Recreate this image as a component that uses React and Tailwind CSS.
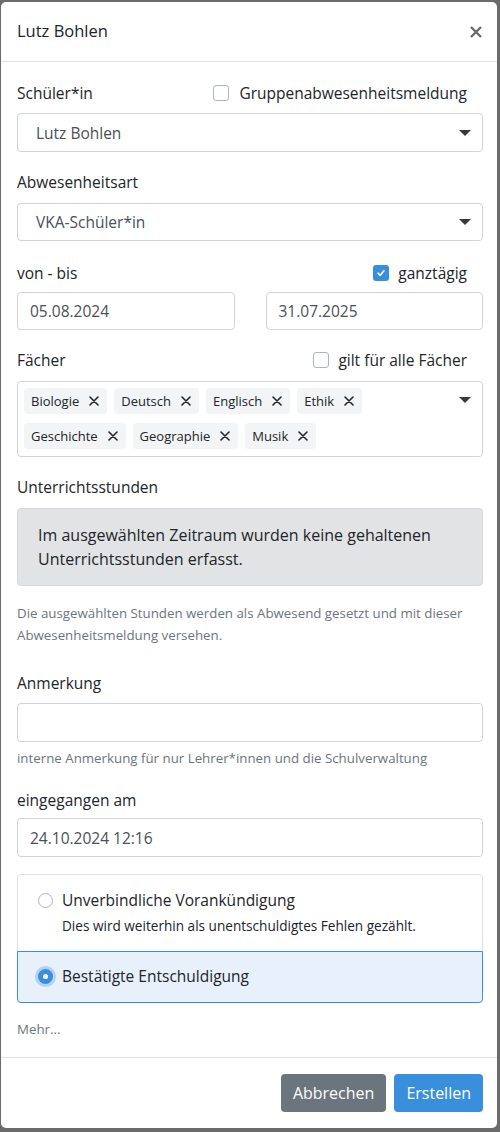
import React from "react";

const Caret = () => (
  <svg width="12" height="6" viewBox="0 0 12 6" className="shrink-0">
    <path d="M0 0 L12 0 L6 6 Z" fill="#343a40" />
  </svg>
);

const TagX = () => (
  <svg width="10" height="10" viewBox="0 0 10 10" className="ml-[10px] shrink-0">
    <path d="M1 1 L9 9 M9 1 L1 9" stroke="#212529" strokeWidth="1.6" strokeLinecap="round" />
  </svg>
);

const Checkbox = ({ checked }) =>
  checked ? (
    <span className="w-4 h-4 rounded-[3px] bg-[#3a8fdd] flex items-center justify-center shrink-0">
      <svg width="10" height="10" viewBox="0 0 10 10">
        <path d="M2 5.2 L4.2 7.3 L8 2.8" stroke="#fff" strokeWidth="1.6" fill="none" strokeLinecap="round" strokeLinejoin="round" />
      </svg>
    </span>
  ) : (
    <span className="w-4 h-4 rounded-[3px] border border-[#adb5bd] bg-white shrink-0" />
  );

const Select = ({ value, className = "" }) => (
  <div className={"border border-[#ced4da] rounded-[4px] flex items-center justify-between pl-[18px] pr-[11px] text-[#495057] " + className}>
    <span>{value}</span>
    <Caret />
  </div>
);

const Input = ({ value, className = "" }) => (
  <div className={"border border-[#ced4da] rounded-[4px] flex items-center px-[12px] text-[#495057] " + className}>
    {value}
  </div>
);

const tags = [
  ["Biologie", "Deutsch", "Englisch", "Ethik"],
  ["Geschichte", "Geographie", "Musik"],
];

const App = () => {
  return (
    <div className="w-[500px] h-[1132px] bg-[#6b6b6b] pl-[1px] pt-[2px] font-['Open_Sans',sans-serif] text-[15.5px] text-[#212529]">
      <div className="w-[496px] h-[1126px] bg-white rounded-[5px] flex flex-col">
        <div className="h-[60px] border-b border-[#dee2e6] flex items-center justify-between pl-4 pr-[15px] shrink-0">
          <span className="text-[16.5px]">Lutz Bohlen</span>
          <svg width="12" height="12" viewBox="0 0 12 12">
            <path d="M1 1 L11 11 M11 1 L1 11" stroke="#6b6b6b" strokeWidth="2.4" />
          </svg>
        </div>

        <div className="pl-4 pr-[14px] pt-[19px] pb-[17px] leading-6">
          <div className="flex justify-between items-center mb-2">
            <span>Schüler*in</span>
            <label className="flex items-center gap-[10px] pr-[16px]">
              <Checkbox />
              <span>Gruppenabwesenheitsmeldung</span>
            </label>
          </div>
          <Select value="Lutz Bohlen" className="h-[39px]" />

          <div className="mt-[18px] mb-[9px]">Abwesenheitsart</div>
          <Select value="VKA-Schüler*in" className="h-[38px]" />

          <div className="flex justify-between items-center mt-[20px] mb-[7px]">
            <span>von - bis</span>
            <label className="flex items-center gap-[9px] pr-[16px]">
              <Checkbox checked />
              <span>ganztägig</span>
            </label>
          </div>
          <div className="flex gap-[31px]">
            <Input value="05.08.2024" className="flex-1 h-[38px]" />
            <Input value="31.07.2025" className="flex-1 h-[38px]" />
          </div>

          <div className="flex justify-between items-center mt-[18px] mb-[9px]">
            <span>Fächer</span>
            <label className="flex items-center gap-[9px] pr-[16px]">
              <Checkbox />
              <span>gilt für alle Fächer</span>
            </label>
          </div>
          <div className="h-[76px] border border-[#ced4da] rounded-[4px] flex justify-between pl-[6px] pr-[11px] pt-[6px]">
            <div className="flex flex-col gap-[9px]">
              {tags.map((row, i) => (
                <div key={i} className="flex gap-[7px]">
                  {row.map((t) => (
                    <span key={t} className="h-[26px] bg-[#f3f4f6] rounded-[4px] flex items-center pl-[7px] pr-[8px] text-[13px] text-[#212529]">
                      {t}
                      <TagX />
                    </span>
                  ))}
                </div>
              ))}
            </div>
            <div className="pt-[9px]">
              <Caret />
            </div>
          </div>

          <div className="mt-[18px] mb-[9px]">Unterrichtsstunden</div>
          <div className="bg-[#e2e3e5] border border-[#d6d8db] rounded-[4px] px-5 py-[14px] text-[16px]">
            Im ausgewählten Zeitraum wurden keine gehaltenen Unterrichtsstunden erfasst.
          </div>
          <p className="mt-[16px] text-[13.3px] leading-[22px] text-[#6c757d]">
            Die ausgewählten Stunden werden als Abwesend gesetzt und mit dieser Abwesenheitsmeldung versehen.
          </p>

          <div className="mt-[25px] mb-2">Anmerkung</div>
          <Input value="" className="h-[39px]" />
          <p className="mt-[5px] text-[13.3px] leading-[22px] text-[#6c757d]">
            interne Anmerkung für nur Lehrer*innen und die Schulverwaltung
          </p>

          <div className="mt-[19px] mb-[6px]">eingegangen am</div>
          <Input value="24.10.2024 12:16" className="h-[39px]" />

          <div className="mt-[17px] border border-[#dee2e6] rounded-[4px]">
            <div className="pl-5 pt-[13px] pb-[16px]">
              <div className="flex items-center gap-[9px]">
                <span className="w-[15px] h-[15px] rounded-full border border-[#adb5bd] bg-white shrink-0" />
                <span>Unverbindliche Vorankündigung</span>
              </div>
              <div className="pl-[24px] mt-[4px] text-[13.6px] leading-5">
                Dies wird weiterhin als unentschuldigtes Fehlen gezählt.
              </div>
            </div>
            <div className="-m-px border border-[#3a8fdd] bg-[#e8f1fb] rounded-b-[4px] pl-5 pt-[12px] pb-[14px]">
              <div className="flex items-center gap-[9px]">
                <span className="w-[15px] h-[15px] rounded-full bg-[#3a8fdd] shadow-[0_0_0_3px_rgba(58,143,221,0.3)] flex items-center justify-center shrink-0">
                  <span className="w-[5px] h-[5px] rounded-full bg-white" />
                </span>
                <span>Bestätigte Entschuldigung</span>
              </div>
            </div>
          </div>

          <div className="mt-[15px] text-[13.3px] leading-[22px] text-[#6c757d]">Mehr...</div>
        </div>

        <div className="border-t border-[#dee2e6] flex justify-end gap-2 pt-4 pr-[14px] text-[16px]">
          <button className="h-[38px] px-3 rounded-[4px] bg-[#6c757d] text-white">Abbrechen</button>
          <button className="h-[38px] px-3 rounded-[4px] bg-[#3a8fdd] text-white">Erstellen</button>
        </div>
      </div>
    </div>
  );
};

export default App;
